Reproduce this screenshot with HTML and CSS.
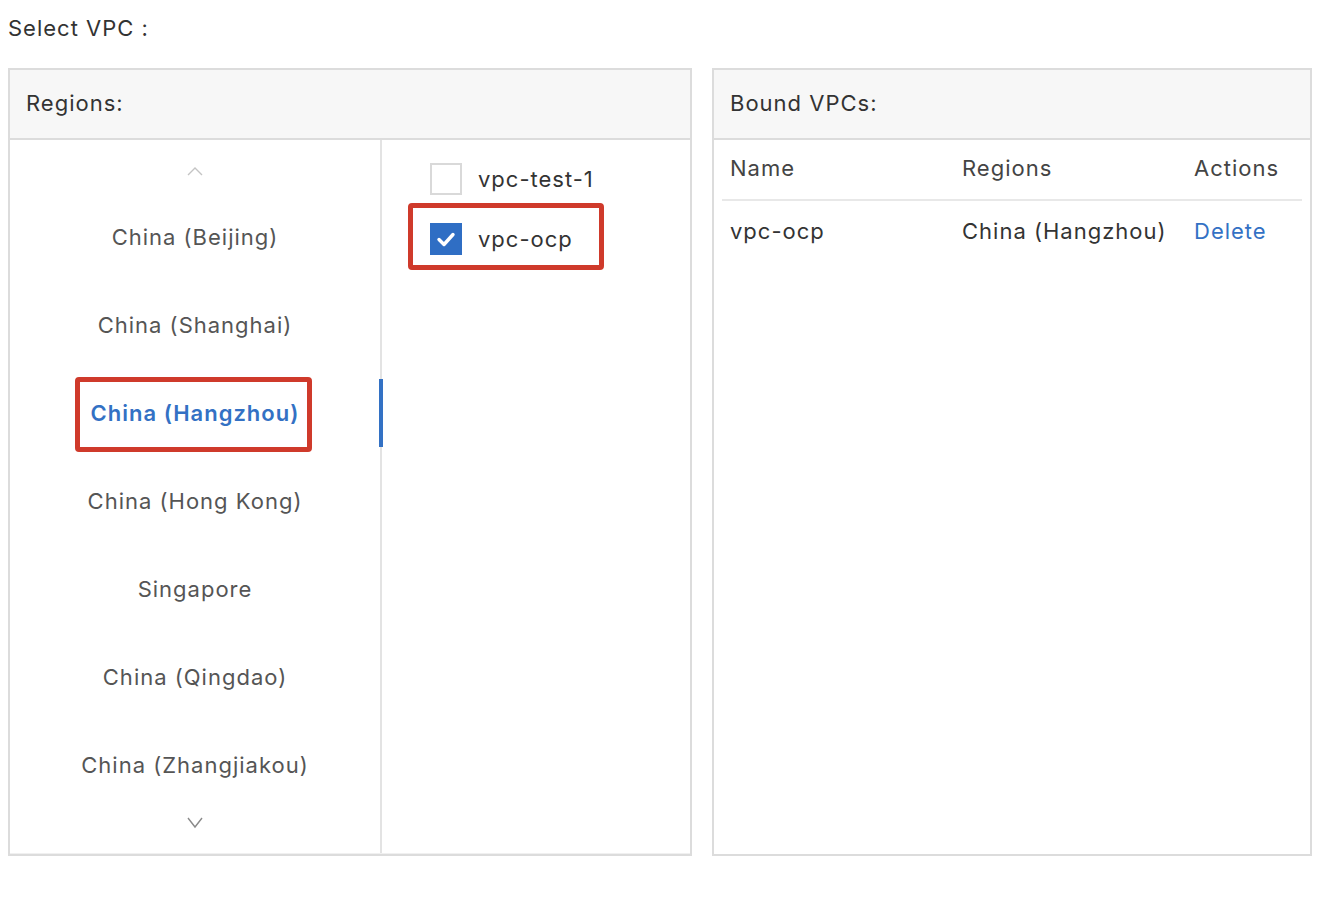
FILE: index.html
```html
<!DOCTYPE html>
<html>
<head>
<meta charset="utf-8">
<link rel="stylesheet" href="styles.css">
</head>
<body>
<div class="title">Select VPC :</div>
<div class="panels">
  <section class="panel panel-left">
    <div class="panel-head">Regions:</div>
    <div class="panel-body">
      <div class="regions">
        <div class="arrow arrow-up">
          <svg width="18" height="12" viewBox="0 0 18 12"><path d="M2 10 L9 3 L16 10" fill="none" stroke="#c4c4c4" stroke-width="1.4"/></svg>
        </div>
        <div class="region">China (Beijing)</div>
        <div class="region">China (Shanghai)</div>
        <div class="region active"><span class="region-label">China (Hangzhou)</span></div>
        <div class="region">China (Hong Kong)</div>
        <div class="region">Singapore</div>
        <div class="region">China (Qingdao)</div>
        <div class="region">China (Zhangjiakou)</div>
        <div class="arrow arrow-down">
          <svg width="18" height="14" viewBox="0 0 18 14"><path d="M2 3 L9 12 L16 3" fill="none" stroke="#8a8a8a" stroke-width="1.4"/></svg>
        </div>
      </div>
      <div class="vpcs">
        <label class="vpc">
          <span class="checkbox"></span>
          <span class="vpc-name">vpc-test-1</span>
        </label>
        <label class="vpc marked">
          <span class="checkbox checked">
            <svg width="32" height="32" viewBox="0 0 32 32"><path d="M9 16.5 L14 21.5 L23 11.5" fill="none" stroke="#fff" stroke-width="3.4" stroke-linecap="round" stroke-linejoin="round"/></svg>
          </span>
          <span class="vpc-name">vpc-ocp</span>
        </label>
      </div>
    </div>
  </section>
  <section class="panel panel-right">
    <div class="panel-head">Bound VPCs:</div>
    <div class="table-wrap">
      <table class="bound">
        <thead>
          <tr><th class="c-name">Name</th><th class="c-region">Regions</th><th class="c-act">Actions</th></tr>
        </thead>
        <tbody>
          <tr><td>vpc-ocp</td><td>China (Hangzhou)</td><td><a class="link">Delete</a></td></tr>
        </tbody>
      </table>
    </div>
  </section>
</div>
</body>
</html>
```

FILE: styles.css
```css
*, *::before, *::after { box-sizing: border-box; }
html, body { margin: 0; padding: 0; background: #fff; }
body {
  padding: 8px 8px 0 8px;
  font-family: Inter, "Open Sans", "Liberation Sans", sans-serif;
  font-size: 22px;
  letter-spacing: 1px;
  color: #333;
}
.title {
  height: 40px;
  line-height: 40px;
  margin-bottom: 20px;
  color: #333;
}
.panels {
  display: flex;
  gap: 20px;
}
.panel {
  border: 2px solid #dcdcdc;
  height: 788px;
  display: flex;
  flex-direction: column;
  background: #fff;
}
.panel-left { width: 684px; }
.panel-right { width: 600px; }
.panel-head {
  height: 70px;
  flex: none;
  background: #f7f7f7;
  border-bottom: 2px solid #dcdcdc;
  padding-left: 16px;
  padding-bottom: 2px;
  display: flex;
  align-items: center;
  color: #333;
}
.panel-body {
  display: flex;
  flex: 1;
  border-bottom: 1px solid #f0f0f0;
}
.regions {
  width: 372px;
  border-right: 2px solid #e3e3e3;
  display: flex;
  flex-direction: column;
  position: relative;
}
.arrow {
  display: flex;
  justify-content: center;
}
.arrow-up { height: 53px; padding-top: 25px; }
.arrow-down { padding-top: 6px; }
.region {
  height: 88px;
  display: flex;
  align-items: center;
  justify-content: center;
  color: #555;
  position: relative;
}
.region.active { color: #3371c4; font-weight: 600; }
.region.active::after {
  content: "";
  position: absolute;
  right: -3px;
  top: 10px;
  width: 4px;
  height: 68px;
  background: #3371c4;
}
.region-label {
  position: relative;
  line-height: 30px;
}
.region-label::before {
  content: "";
  position: absolute;
  left: -16px;
  right: -13px;
  top: -21px;
  bottom: -24px;
  border: 5px solid #cf3a2b;
  border-radius: 4px;
}
.vpcs {
  flex: 1;
  display: flex;
  flex-direction: column;
  padding-top: 9px;
}
.vpc {
  height: 60px;
  display: flex;
  align-items: center;
  gap: 16px;
  padding-left: 48px;
  position: relative;
  color: #333;
}
.vpc.marked::before {
  content: "";
  position: absolute;
  left: 26px;
  width: 196px;
  top: -6px;
  bottom: -1px;
  border: 5px solid #cf3a2b;
  border-radius: 4px;
}
.checkbox {
  width: 32px;
  height: 32px;
  border: 2px solid #d9d9d9;
  background: #fff;
  display: block;
  flex: none;
}
.checkbox.checked {
  border: none;
  background: #2f6ec4;
}
.checkbox svg { display: block; }
.vpc-name { position: relative; }
.table-wrap {
  padding: 0 8px;
}
.bound {
  width: 580px;
  border-collapse: collapse;
  table-layout: fixed;
}
.bound th, .bound td {
  text-align: left;
  font-weight: normal;
  padding: 0 0 0 8px;
  white-space: nowrap;
}
.bound th {
  height: 60px;
  padding-bottom: 4px;
  border-bottom: 2px solid #e8e8e8;
  color: #444;
}
.bound td {
  height: 60px;
  padding-bottom: 0;
  color: #333;
}
.c-name { width: 232px; }
.c-region { width: 232px; }
.c-act { width: 116px; }
.link { color: #3371c4; }
```
